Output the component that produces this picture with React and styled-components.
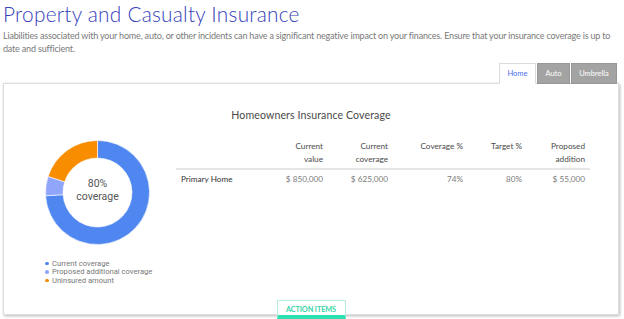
import React from 'react';
import styled, { createGlobalStyle } from 'styled-components';

const GlobalStyle = createGlobalStyle`
  body {
    margin: 0;
    background: #ffffff;
    font-family: Lato, "Noto Sans", sans-serif;
  }
`

const Page = styled.div`
  width: 624px;
  height: 319px;
  box-sizing: border-box;
  padding: 1px 5px 0 3px;
  overflow: hidden;
`

const Title = styled.h1`
  margin: 0;
  font-size: 20.8px;
  line-height: 26px;
  font-weight: 300;
  color: #3542bb;
  letter-spacing: 0.25px;
`

const Intro = styled.p`
  margin: 3px 0 0;
  font-size: 9px;
  line-height: 12.5px;
  color: #7a7a7a;
  letter-spacing: -0.18px;
`

const TabRow = styled.div`
  display: flex;
  justify-content: flex-end;
  gap: 1px;
  margin-top: 8px;
  padding-right: 2px;
  position: relative;
  z-index: 1;
`

const Tab = styled.div`
  height: 21px;
  width: ${p => p.$w}px;
  box-sizing: border-box;
  display: flex;
  align-items: center;
  justify-content: center;
  font-size: 7.5px;
  color: ${p => (p.$active ? '#4d6ff0' : '#ffffff')};
  background: ${p => (p.$active ? '#ffffff' : '#a3a3a3')};
  border: 1px solid ${p => (p.$active ? '#dcdcdc' : '#979797')};
  border-bottom: ${p => (p.$active ? '1px solid #ffffff' : '1px solid #979797')};
  margin-bottom: -1px;
`

const Panel = styled.div`
  height: 232px;
  box-sizing: border-box;
  border: 1px solid #dedede;
  box-shadow: 1px 1px 3px rgba(0, 0, 0, 0.28);
  display: flex;
  flex-direction: column;
`

const Heading = styled.div`
  text-align: center;
  font-size: 10.6px;
  line-height: 14px;
  color: #4a4a4a;
  padding-top: 24px;
  letter-spacing: 0.1px;
`

const Body = styled.div`
  display: flex;
  margin-top: 18px;
`

const ChartCol = styled.div`
  width: 172px;
  box-sizing: border-box;
  padding-left: 41px;
  font-family: Roboto, Arial, sans-serif;
`

const DonutWrap = styled.div`
  position: relative;
  width: 105px;
  height: 105px;
  margin-top: 0;
`

const DonutLabel = styled.div`
  position: absolute;
  inset: 0;
  display: flex;
  flex-direction: column;
  align-items: center;
  justify-content: center;
  font-size: 10.5px;
  line-height: 12.5px;
  color: #555555;
  padding-bottom: 4px;
`

const Legend = styled.ul`
  list-style: none;
  margin: 14px 0 0;
  padding: 0;
`

const LegendItem = styled.li`
  display: flex;
  align-items: center;
  height: 8.6px;
  font-size: 7.6px;
  color: #777777;
  &::before {
    content: '';
    width: 3.5px;
    height: 3.5px;
    border-radius: 50%;
    background: ${p => p.$color};
    margin-right: 3.5px;
  }
`

const Table = styled.div`
  display: grid;
  grid-template-columns: 104px 48px 65px 75px 59px 63px;
  font-size: 8.2px;
`

const HeadCell = styled.div`
  padding: 0 5px 3px 0;
  line-height: 12.5px;
  color: #4a4a4a;
  border-bottom: 2px solid #e6e6e6;
  display: flex;
  flex-direction: column;
  align-items: flex-end;
`

const Cell = styled.div`
  text-align: ${p => (p.$left ? 'left' : 'right')};
  padding: ${p => (p.$left ? '3px 0 0 5px' : '3px 5px 0 0')};
  line-height: 12px;
  color: ${p => (p.$left ? '#333333' : '#7a7a7a')};
`

const ActionButton = styled.button`
  align-self: center;
  margin-top: auto;
  margin-bottom: -5px;
  width: 69px;
  height: 19px;
  box-sizing: border-box;
  background: #ffffff;
  border: 1px solid #b6eedf;
  border-bottom: 4px solid #2fe0b1;
  border-radius: 1px;
  font-family: Lato, sans-serif;
  font-size: 7.3px;
  font-weight: 700;
  color: #37d6a8;
  padding: 2px 0 0;
  letter-spacing: -0.1px;
`

const segments = [
  { value: 0.74, color: '#4f86ef' },
  { value: 0.06, color: '#90a6fb' },
  { value: 0.2, color: '#f88d00' },
]

function arc(cx, cy, ro, ri, a0, a1) {
  const p = (r, a) => [cx + r * Math.sin(a), cy - r * Math.cos(a)]
  const large = a1 - a0 > Math.PI ? 1 : 0
  const [x0, y0] = p(ro, a0)
  const [x1, y1] = p(ro, a1)
  const [x2, y2] = p(ri, a1)
  const [x3, y3] = p(ri, a0)
  return `M${x0} ${y0} A${ro} ${ro} 0 ${large} 1 ${x1} ${y1} L${x2} ${y2} A${ri} ${ri} 0 ${large} 0 ${x3} ${y3} Z`
}

function Donut() {
  let start = 0
  return (
    <svg width="105" height="105" viewBox="0 0 105 105">
      {segments.map((s, i) => {
        const a0 = start * Math.PI * 2
        start += s.value
        const a1 = start * Math.PI * 2
        return (
          <path
            key={i}
            d={arc(52.5, 52.5, 52, 34.5, a0, a1)}
            fill={s.color}
            stroke="#ffffff"
            strokeWidth="0.6"
          />
        )
      })}
    </svg>
  )
}

const headers = [
  ['Current', 'value'],
  ['Current', 'coverage'],
  ['Coverage %'],
  ['Target %'],
  ['Proposed', 'addition'],
]

export default function App() {
  return (
    <Page>
      <GlobalStyle />
      <Title>Property and Casualty Insurance</Title>
      <Intro>
        Liabilities associated with your home, auto, or other incidents can have a significant
        negative impact on your finances. Ensure that your insurance coverage is up to date and
        sufficient.
      </Intro>
      <TabRow>
        <Tab $active $w={37}>Home</Tab>
        <Tab $w={33}>Auto</Tab>
        <Tab $w={46}>Umbrella</Tab>
      </TabRow>
      <Panel>
        <Heading>Homeowners Insurance Coverage</Heading>
        <Body>
          <ChartCol>
            <DonutWrap>
              <Donut />
              <DonutLabel>
                <span>80%</span>
                <span>coverage</span>
              </DonutLabel>
            </DonutWrap>
            <Legend>
              <LegendItem $color="#4f86ef">Current coverage</LegendItem>
              <LegendItem $color="#90a6fb">Proposed additional coverage</LegendItem>
              <LegendItem $color="#f88d00">Uninsured amount</LegendItem>
            </Legend>
          </ChartCol>
          <div>
            <Table>
              <HeadCell />
              {headers.map((h, i) => (
                <HeadCell key={i}>
                  {h.map(line => (
                    <span key={line}>{line}</span>
                  ))}
                </HeadCell>
              ))}
              <Cell $left>Primary Home</Cell>
              <Cell>$ 850,000</Cell>
              <Cell>$ 625,000</Cell>
              <Cell>74%</Cell>
              <Cell>80%</Cell>
              <Cell>$ 55,000</Cell>
            </Table>
          </div>
        </Body>
        <ActionButton>ACTION ITEMS</ActionButton>
      </Panel>
    </Page>
  )
}
